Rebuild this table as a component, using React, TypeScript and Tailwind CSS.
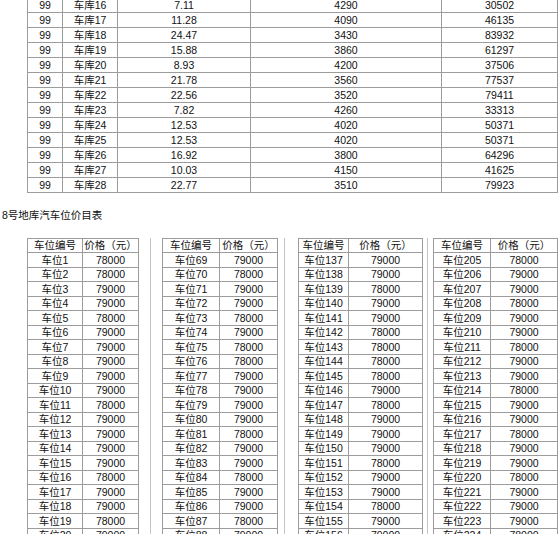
const garages: [string, string, string, string][] = [
  ['车库16', '7.11', '4290', '30502'],
  ['车库17', '11.28', '4090', '46135'],
  ['车库18', '24.47', '3430', '83932'],
  ['车库19', '15.88', '3860', '61297'],
  ['车库20', '8.93', '4200', '37506'],
  ['车库21', '21.78', '3560', '77537'],
  ['车库22', '22.56', '3520', '79411'],
  ['车库23', '7.82', '4260', '33313'],
  ['车库24', '12.53', '4020', '50371'],
  ['车库25', '12.53', '4020', '50371'],
  ['车库26', '16.92', '3800', '64296'],
  ['车库27', '10.03', '4150', '41625'],
  ['车库28', '22.77', '3510', '79923'],
];

// price lists, starting number + prices (8 = 78000, 9 = 79000)
const lots: { start: number; prices: string; widths: [string, string]; gap?: string }[] = [
  { start: 1, prices: '88998999998999989989', widths: ['w-[55px]', 'w-[56px]'], gap: 'w-[23px] pl-[11px]' },
  { start: 69, prices: '98998988999989989989', widths: ['w-[57px]', 'w-[58px]'], gap: 'w-[20px] pl-[6px]' },
  { start: 137, prices: '99899888898999899899', widths: ['w-[50px]', 'w-[74px]'], gap: 'w-[10px] pl-[4px]' },
  { start: 205, prices: '89989989989989989998', widths: ['w-[57px]', 'w-[67px]'] },
];

const cell = 'flex items-center justify-center border-r border-b border-[#9c9c9c] whitespace-nowrap';

const PriceTable = ({ start, prices, widths }: { start: number; prices: string; widths: [string, string] }) => (
  <div className="flex flex-col border-l border-t border-[#9c9c9c]">
    <div className="flex h-[14px]">
      <div className={`${cell} ${widths[0]}`}>车位编号</div>
      <div className={`${cell} ${widths[1]}`}>价格（元）</div>
    </div>
    {prices.split('').map((p, i) => (
      <div key={i} className={`flex ${i % 2 ? 'h-[14px]' : 'h-[15px]'}`}>
        <div className={`${cell} ${widths[0]}`}>车位{start + i}</div>
        <div className={`${cell} ${widths[1]}`}>{p === '8' ? '78000' : '79000'}</div>
      </div>
    ))}
  </div>
);

export default function App() {
  return (
    <div className="h-[534px] w-[560px] overflow-hidden bg-white text-[10.5px] leading-none text-[#111] font-['Liberation_Sans','Noto_Sans_CJK_SC',sans-serif]">
      {/* remaining rows of the garage table */}
      <div className="ml-[27px] -mt-[3px] flex w-[531px] flex-col border-l border-t border-[#9c9c9c]">
        {garages.map((g) => (
          <div key={g[0]} className="flex h-[15px]">
            <div className={`${cell} w-[35px]`}>99</div>
            <div className={`${cell} w-[55px]`}>{g[0]}</div>
            <div className={`${cell} w-[133px]`}>{g[1]}</div>
            <div className={`${cell} w-[191px]`}>{g[2]}</div>
            <div className={`${cell} w-[116px]`}>{g[3]}</div>
          </div>
        ))}
      </div>

      <div className="flex h-[45px] items-center pl-[2px]">8号地库汽车位价目表</div>

      <div className="ml-[27px] flex">
        {lots.map((l) => (
          <div key={l.start} className="flex">
            <PriceTable start={l.start} prices={l.prices} widths={l.widths} />
            {l.gap && (
              <div className={`${l.gap} flex`}>
                <div className="h-full border-l border-[#c4c4c4]" />
              </div>
            )}
          </div>
        ))}
      </div>
    </div>
  );
}
